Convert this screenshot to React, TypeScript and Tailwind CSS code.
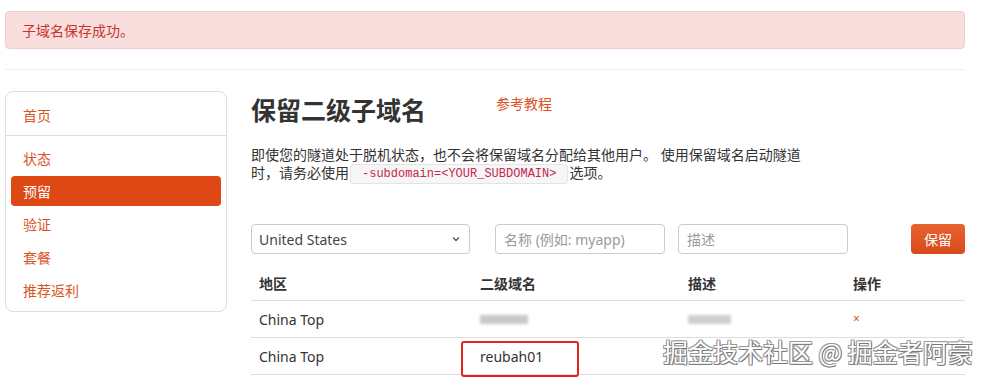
import React from "react";

const navItems = ["状态", "预留", "验证", "套餐", "推荐返利"];

type Row = { region: string; sub: string | null; desc: string | null };

const rows: Row[] = [
  { region: "China Top", sub: null, desc: null },
  { region: "China Top", sub: "reubah01", desc: "" },
];

export default function App() {
  return (
    <div
      className="relative w-[988px] h-[381px] overflow-hidden bg-white text-[#333] text-[14px]"
      style={{ fontFamily: '"Noto Sans", "Noto Sans CJK SC", sans-serif' }}
    >
      <div className="w-[960px] ml-[5px] pt-[11px]">
        {/* alert */}
        <div className="h-[38px] flex items-center pl-[16px] rounded-[4px] border border-[#f0cdd0] bg-[#f9dede] text-[#c8332d]">
          子域名保存成功。
        </div>

        <div className="mt-[20px] border-t border-[#eeeeee]" />

        <div className="flex mt-[21px] gap-[24px]">
          {/* sidebar */}
          <div className="w-[222px] h-[221px] shrink-0 rounded-[8px] border border-[#dddddd] text-[#d9541f]">
            <div className="h-[44px] flex items-center pl-[17px] pt-[4px] border-b border-[#dddddd]">首页</div>
            <div className="px-[5px] pt-[7px]">
              {navItems.map((n) => (
                <div
                  key={n}
                  className={
                    n === "预留"
                      ? "h-[30px] mb-[3px] flex items-center pl-[12px] rounded-[4px] bg-[#dd4814] text-white"
                      : "h-[30px] mb-[3px] flex items-center pl-[12px]"
                  }
                >
                  {n}
                </div>
              ))}
            </div>
          </div>

          {/* main */}
          <div className="flex-1">
            <div className="flex items-start">
              <h1 className="text-[25px] font-bold leading-[36px] text-[#333] mt-[1px]">保留二级子域名</h1>
              <a className="ml-[70px] mt-[2px] text-[#d9541f]">参考教程</a>
            </div>

            <p className="w-[558px] mt-[18px] leading-[18px]">
              即使您的隧道处于脱机状态，也不会将保留域名分配给其他用户。 使用保留域名启动隧道时，请务必使用
              <code
                className="inline-block mx-[1px] px-[11px] h-[20px] leading-[19px] align-middle rounded-[3px] border border-[#e4e4e4] bg-[#f6f6f6] text-[12px] text-[#c7254e]"
                style={{ fontFamily: '"Liberation Mono", monospace' }}
              >
                -subdomain=&lt;YOUR_SUBDOMAIN&gt;
              </code>
              选项。
            </p>

            {/* form */}
            <div className="flex items-center mt-[40px] h-[30px]">
              <div className="w-[219px] h-[30px] flex items-center justify-between px-[7px] rounded-[4px] border border-[#cccccc] text-[#444]">
                <span>United States</span>
                <svg width="10" height="10" viewBox="0 0 10 10" className="mr-[1px]">
                  <path d="M2 3.5 L5 6.5 L8 3.5" stroke="#555" strokeWidth="1.3" fill="none" />
                </svg>
              </div>
              <div className="ml-[25px] w-[170px] h-[30px] flex items-center px-[8px] rounded-[4px] border border-[#cccccc] text-[#9a9a9a]">
                名称 (例如: myapp)
              </div>
              <div className="ml-[13px] w-[170px] h-[30px] flex items-center px-[8px] rounded-[4px] border border-[#cccccc] text-[#9a9a9a]">
                描述
              </div>
              <button className="ml-auto w-[54px] h-[30px] rounded-[4px] bg-gradient-to-b from-[#e8622f] to-[#d84b18] text-white">
                保留
              </button>
            </div>

            {/* table */}
            <div className="mt-[12px]">
              <div className="flex h-[35px] items-center font-bold border-b border-[#dddddd]">
                <div className="w-[221px] pl-[8px]">地区</div>
                <div className="w-[208px] pl-[8px]">二级域名</div>
                <div className="w-[165px] pl-[8px]">描述</div>
                <div className="pl-[8px]">操作</div>
              </div>
              {rows.map((r, i) => (
                <div key={i} className="flex h-[37px] items-center border-b border-[#dddddd]">
                  <div className="w-[221px] pl-[8px]">{r.region}</div>
                  <div className="w-[208px] pl-[8px] relative">
                    {r.sub === null ? (
                      <div className="w-[48px] h-[9px] bg-[#c8c8c8] blur-[1.5px]" />
                    ) : (
                      <>
                        <span>{r.sub}</span>
                        <div className="absolute left-[-11px] top-[-5px] w-[118px] h-[36px] rounded-[3px] border-2 border-[#e5211d]" />
                      </>
                    )}
                  </div>
                  <div className="w-[165px] pl-[8px]">
                    {r.desc === null ? <div className="w-[43px] h-[9px] bg-[#cfcfcf] blur-[1.5px]" /> : null}
                  </div>
                  <div className="pl-[8px] text-[12px] text-[#e0502a]">×</div>
                </div>
              ))}
            </div>
          </div>
        </div>
      </div>

      {/* watermark */}
      <div
        className="absolute left-[663px] top-[337px] text-[25px] leading-[29px] text-white whitespace-nowrap"
        style={{
          fontFamily: '"Noto Sans CJK SC", sans-serif',
          textShadow: "1px 1px 0 #777, -1px -1px 0 #999, 1px -1px 0 #999, -1px 1px 0 #888",
        }}
      >
        掘金技术社区 @ 掘金者阿豪
      </div>
    </div>
  );
}
